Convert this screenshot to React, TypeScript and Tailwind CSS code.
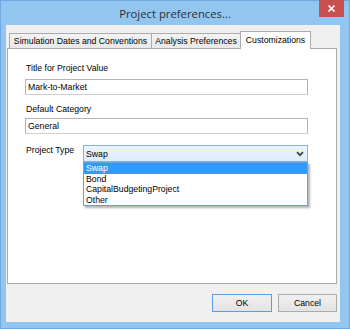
import React from "react";

const font = "font-['Liberation_Sans',Arial,sans-serif]";

export default function App() {
  return (
    <div
      className={`w-[350px] h-[329px] bg-[#92c5f0] shadow-[inset_0_0_0_1px_#6fa9df] flex flex-col ${font} text-[8.7px] text-black`}
    >
      {/* Title bar */}
      <div className="h-[25px] grid grid-cols-[1fr_auto_1fr] items-start shrink-0">
        <div />
        <div className="font-['Open_Sans',sans-serif] text-[11.3px] leading-[25px] text-[#303030] pt-px">Project preferences...</div>
        <div className="flex justify-end pr-[6px]">
          <div className="w-[25px] h-[17px] bg-[#c75050] flex items-center justify-center">
            <svg width="25" height="17" viewBox="0 0 25 17">
              <path d="M9.5 5.5 L15.5 11.5 M15.5 5.5 L9.5 11.5" stroke="white" strokeWidth="1.7" />
            </svg>
          </div>
        </div>
      </div>

      {/* Client area */}
      <div className="flex-1 ml-[6px] mr-[10px] mb-[7px] bg-[#f0f0f0] flex flex-col pr-[3px]">
        {/* Tabs */}
        <div className="pt-[6px] pl-[3px] flex items-end h-[23px] shrink-0">
          <div className="w-[143px] h-[15px] border border-b-0 border-[#acacac] bg-gradient-to-b from-[#f3f3f3] to-[#e8e8e8] flex items-center justify-center leading-[11px]">
            Simulation Dates and Conventions
          </div>
          <div className="-ml-px w-[90px] h-[15px] border border-b-0 border-[#acacac] bg-gradient-to-b from-[#f3f3f3] to-[#e8e8e8] flex items-center justify-center leading-[11px]">
            Analysis Preferences
          </div>
          <div className="-ml-px w-[71px] h-[18px] -mb-px relative z-10 border border-b-0 border-[#acacac] bg-white flex items-start justify-center pt-[3px] leading-[11px]">
            Customizations
          </div>
        </div>

        {/* Panel */}
        <div className="flex-1 ml-px border border-[#acacac] bg-white pl-[17px] pt-[14px] flex flex-col">
          <div className="pl-px leading-[11px] h-[11px]">Title for Project Value</div>
          <div className="mt-[5px] w-[283px] h-[16px] border border-[#b5b5b5] border-b-[#cfcfcf] bg-white flex items-center pl-[2px] leading-[11px]">
            Mark-to-Market
          </div>
          <div className="mt-[9px] pl-px leading-[11px] h-[11px]">Default Category</div>
          <div className="mt-[3px] w-[283px] h-[16px] border border-[#b5b5b5] border-b-[#cfcfcf] bg-white flex items-center pl-[2px] leading-[11px]">
            General
          </div>
          <div className="mt-[11px] flex items-start">
            <div className="w-[58px] pl-px leading-[11px]">Project Type</div>
            <div className="relative w-[225px]">
              <div className="h-[17px] border border-[#7eb4ea] bg-gradient-to-b from-[#ecf4fc] to-[#dcecfc] flex items-center justify-between pl-[2px] pr-[3px] leading-[11px] pt-[2px]">
                <span>Swap</span>
                <svg width="8" height="6" viewBox="0 0 8 6" className="-mt-[2px]">
                  <polyline points="1,1.2 4,4.2 7,1.2" fill="none" stroke="#404040" strokeWidth="1.7" />
                </svg>
              </div>
              <div className="absolute left-0 right-0 top-full z-20 border border-[#6f9fd3] bg-white shadow-[2px_2px_2px_rgba(0,0,0,0.3)] flex flex-col">
                <div className="h-[10.5px] leading-[10.5px] pl-[2px] bg-[#3399ff] text-white">Swap</div>
                <div className="h-[10.5px] leading-[10.5px] pl-[2px]">Bond</div>
                <div className="h-[10.5px] leading-[10.5px] pl-[2px]">CapitalBudgetingProject</div>
                <div className="h-[10.5px] leading-[10.5px] pl-[2px]">Other</div>
              </div>
            </div>
          </div>
        </div>

        {/* Buttons */}
        <div className="h-[38px] shrink-0 flex items-start justify-end gap-[6px] pt-[10px]">
          <div className="w-[60px] h-[18px] border border-[#5a9fe2] bg-gradient-to-b from-[#f0f0f0] to-[#e3e3e3] flex items-center justify-center leading-[11px]">
            OK
          </div>
          <div className="w-[59px] h-[18px] border border-[#acacac] bg-gradient-to-b from-[#f0f0f0] to-[#e3e3e3] flex items-center justify-center leading-[11px]">
            Cancel
          </div>
        </div>
      </div>
    </div>
  );
}
